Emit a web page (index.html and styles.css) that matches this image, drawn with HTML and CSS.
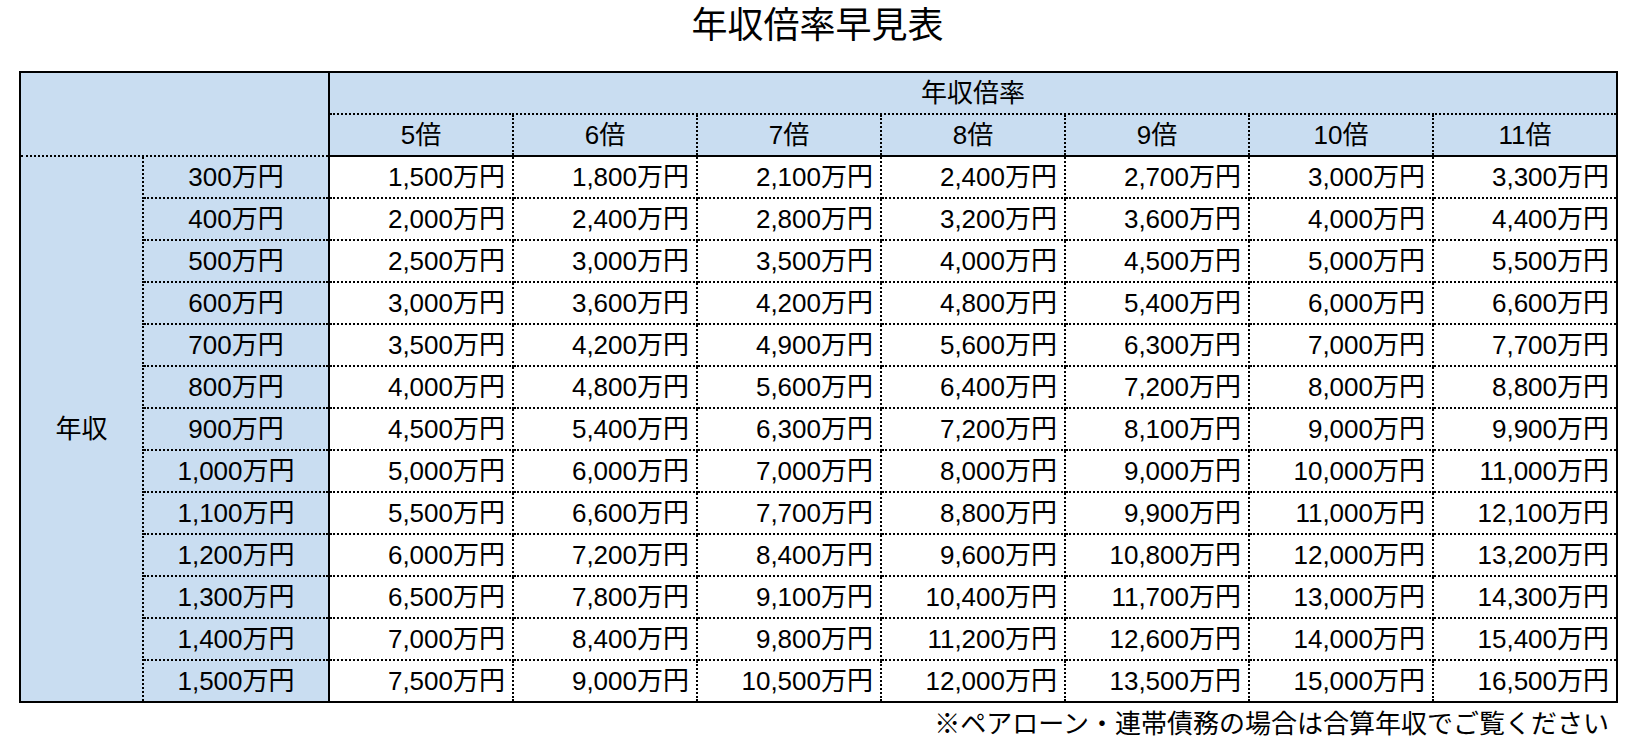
FILE: index.html
```html
<!DOCTYPE html>
<html lang="ja">
<head>
<meta charset="utf-8">
<title>年収倍率早見表</title>
<link rel="stylesheet" href="styles.css">
</head>
<body>
<div class="page">
  <h1 class="title">年収倍率早見表</h1>
  <table class="grid">
    <colgroup>
      <col class="c-label"><col class="c-income">
      <col class="c-val"><col class="c-val"><col class="c-val"><col class="c-val"><col class="c-val"><col class="c-val"><col class="c-val">
    </colgroup>
    <thead>
      <tr class="hrow">
        <th class="corner" colspan="2" rowspan="2"></th>
        <th class="group" colspan="7">年収倍率</th>
      </tr>
      <tr class="hrow">
        <th class="mult first">5倍</th><th class="mult">6倍</th><th class="mult">7倍</th><th class="mult">8倍</th><th class="mult">9倍</th><th class="mult">10倍</th><th class="mult">11倍</th>
      </tr>
    </thead>
    <tbody>
      <tr><th class="side" rowspan="13">年収</th><th class="inc">300万円</th><td class="first">1,500万円</td><td>1,800万円</td><td>2,100万円</td><td>2,400万円</td><td>2,700万円</td><td>3,000万円</td><td>3,300万円</td></tr>
      <tr><th class="inc">400万円</th><td class="first">2,000万円</td><td>2,400万円</td><td>2,800万円</td><td>3,200万円</td><td>3,600万円</td><td>4,000万円</td><td>4,400万円</td></tr>
      <tr><th class="inc">500万円</th><td class="first">2,500万円</td><td>3,000万円</td><td>3,500万円</td><td>4,000万円</td><td>4,500万円</td><td>5,000万円</td><td>5,500万円</td></tr>
      <tr><th class="inc">600万円</th><td class="first">3,000万円</td><td>3,600万円</td><td>4,200万円</td><td>4,800万円</td><td>5,400万円</td><td>6,000万円</td><td>6,600万円</td></tr>
      <tr><th class="inc">700万円</th><td class="first">3,500万円</td><td>4,200万円</td><td>4,900万円</td><td>5,600万円</td><td>6,300万円</td><td>7,000万円</td><td>7,700万円</td></tr>
      <tr><th class="inc">800万円</th><td class="first">4,000万円</td><td>4,800万円</td><td>5,600万円</td><td>6,400万円</td><td>7,200万円</td><td>8,000万円</td><td>8,800万円</td></tr>
      <tr><th class="inc">900万円</th><td class="first">4,500万円</td><td>5,400万円</td><td>6,300万円</td><td>7,200万円</td><td>8,100万円</td><td>9,000万円</td><td>9,900万円</td></tr>
      <tr><th class="inc">1,000万円</th><td class="first">5,000万円</td><td>6,000万円</td><td>7,000万円</td><td>8,000万円</td><td>9,000万円</td><td>10,000万円</td><td>11,000万円</td></tr>
      <tr><th class="inc">1,100万円</th><td class="first">5,500万円</td><td>6,600万円</td><td>7,700万円</td><td>8,800万円</td><td>9,900万円</td><td>11,000万円</td><td>12,100万円</td></tr>
      <tr><th class="inc">1,200万円</th><td class="first">6,000万円</td><td>7,200万円</td><td>8,400万円</td><td>9,600万円</td><td>10,800万円</td><td>12,000万円</td><td>13,200万円</td></tr>
      <tr><th class="inc">1,300万円</th><td class="first">6,500万円</td><td>7,800万円</td><td>9,100万円</td><td>10,400万円</td><td>11,700万円</td><td>13,000万円</td><td>14,300万円</td></tr>
      <tr><th class="inc">1,400万円</th><td class="first">7,000万円</td><td>8,400万円</td><td>9,800万円</td><td>11,200万円</td><td>12,600万円</td><td>14,000万円</td><td>15,400万円</td></tr>
      <tr><th class="inc">1,500万円</th><td class="first">7,500万円</td><td>9,000万円</td><td>10,500万円</td><td>12,000万円</td><td>13,500万円</td><td>15,000万円</td><td>16,500万円</td></tr>
    </tbody>
  </table>
  <p class="note">※ペアローン・連帯債務の場合は合算年収でご覧ください</p>
</div>
</body>
</html>
```

FILE: styles.css
```css
html, body {
  margin: 0;
  padding: 0;
  background: #ffffff;
}

body {
  font-family: "Liberation Sans", "Noto Sans CJK JP", sans-serif;
  color: #000000;
}

.page {
  padding: 0 20px 0 19px;
}

.title {
  margin: 0 0 19px 0;
  font-size: 36px;
  line-height: 52px;
  font-weight: normal;
  text-align: center;
}

.grid {
  width: 1597px;
  table-layout: fixed;
  border-collapse: collapse;
  border: 2px solid #000;
  font-size: 26px;
}

.c-label { width: 123px; }
.c-income { width: 186px; }
.c-val { width: 184px; }

.grid th,
.grid td {
  padding: 0;
  height: 40px;
  line-height: 40px;
  font-weight: normal;
  white-space: nowrap;
  border: 2px dotted #000;
}

.grid thead th {
  background: #c9ddf1;
  text-align: center;
}

.grid .corner {
  border-right: 2px solid #000;
}

.grid thead tr:last-child th {
  border-bottom: 2px solid #000;
}

.grid .side {
  background: #c9ddf1;
  text-align: center;
  border-left: 2px solid #000;
  border-bottom: 2px solid #000;
}

.grid .inc {
  background: #c9ddf1;
  text-align: center;
  border-right: 2px solid #000;
}

.grid td {
  text-align: right;
  padding-right: 7px;
  background: #ffffff;
}

.grid .first {
  border-left: 2px solid #000;
}

.grid tbody tr:last-child th,
.grid tbody tr:last-child td {
  border-bottom: 2px solid #000;
}

.grid tr > :last-child {
  border-right: 2px solid #000;
}

.grid thead tr:first-child th {
  border-top: 2px solid #000;
}

.note {
  margin: 4px 7px 0 0;
  font-size: 26px;
  line-height: 34px;
  text-align: right;
}
```
